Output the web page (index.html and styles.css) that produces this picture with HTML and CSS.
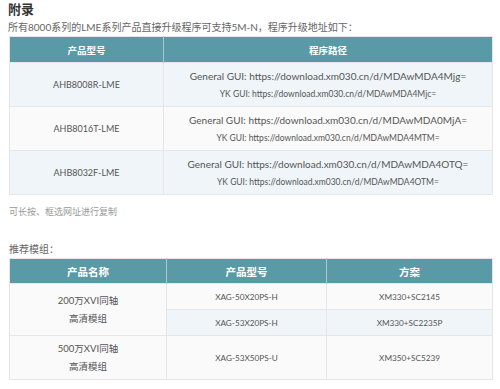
FILE: index.html
```html
<!DOCTYPE html>
<html lang="zh-CN">
<head>
  <meta charset="UTF-8" />
  <title>附录</title>
  <link rel="stylesheet" href="styles.css">
</head>
<body>
  <div class="page">
    <h2 class="title">附录</h2>
    <p class="intro">所有8000系列的LME系列产品直接升级程序可支持5M-N，程序升级地址如下：</p>

    <!-- Upgrade links -->
    <table class="grid links">
      <thead>
        <tr>
          <th class="col-model">产品型号</th>
          <th>程序路径</th>
        </tr>
      </thead>
      <tbody>
        <tr class="alt">
          <td class="model">AHB8008R-LME</td>
          <td>
            <div class="url">General GUI: https://download.xm030.cn/d/MDAwMDA4Mjg=</div>
            <div class="url small">YK GUI: https://download.xm030.cn/d/MDAwMDA4Mjc=</div>
          </td>
        </tr>
        <tr>
          <td class="model">AHB8016T-LME</td>
          <td>
            <div class="url">General GUI: https://download.xm030.cn/d/MDAwMDA0MjA=</div>
            <div class="url small">YK GUI: https://download.xm030.cn/d/MDAwMDA4MTM=</div>
          </td>
        </tr>
        <tr class="alt">
          <td class="model">AHB8032F-LME</td>
          <td>
            <div class="url">General GUI: https://download.xm030.cn/d/MDAwMDA4OTQ=</div>
            <div class="url small">YK GUI: https://download.xm030.cn/d/MDAwMDA4OTM=</div>
          </td>
        </tr>
      </tbody>
    </table>

    <p class="hint">可长按、框选网址进行复制</p>

    <p class="sub">推荐模组：</p>

    <!-- Recommended modules -->
    <table class="grid modules">
      <thead>
        <tr>
          <th class="col-name">产品名称</th>
          <th class="col-part">产品型号</th>
          <th>方案</th>
        </tr>
      </thead>
      <tbody>
        <tr class="short">
          <td rowspan="2" class="name">200万XVI同轴<br>高清模组</td>
          <td>XAG-50X20PS-H</td>
          <td>XM330+SC2145</td>
        </tr>
        <tr class="short alt">
          <td>XAG-53X20PS-H</td>
          <td>XM330+SC2235P</td>
        </tr>
        <tr>
          <td class="name">500万XVI同轴<br>高清模组</td>
          <td>XAG-53X50PS-U</td>
          <td>XM350+SC5239</td>
        </tr>
      </tbody>
    </table>
  </div>
</body>
</html>
```

FILE: styles.css
```css
* {
  margin: 0;
  padding: 0;
  box-sizing: border-box;
}
body {
  background: #ffffff;
  font-family: Lato, "Noto Sans CJK SC", sans-serif;
  color: #555;
}
.page {
  padding: 1px 7px 0 9px;
}
.title {
  font-size: 13px;
  font-weight: 700;
  color: #333;
  line-height: 16px;
  margin-left: -1px;
}
.intro {
  font-size: 10px;
  line-height: 14px;
  color: #666;
  margin: 3px 0 2px -1px;
  white-space: nowrap;
}
/* shared table look */
.grid {
  width: 100%;
  border-collapse: collapse;
  table-layout: fixed;
  border: 1px solid #e6e6e6;
}
.grid th {
  background: #5a99a6;
  color: #fff;
  font-weight: 700;
  font-size: 9.5px;
  height: 26px;
  border-right: 1px solid #a8c8d0;
}
.grid th:last-child {
  border-right: none;
}
.grid td {
  background: #fafafa;
  text-align: center;
  font-size: 9px;
  color: #555;
  border: 1px solid #e6e6e6;
  white-space: nowrap;
  padding: 0;
}
.grid tr.alt td {
  background: #eff5f8;
}
/* links table */
.links .col-model {
  width: 154px;
}
.links td {
  height: 44px;
}
.url {
  font-size: 10px;
  line-height: 18px;
}
.url.small {
  font-size: 8.5px;
}
.hint {
  font-size: 9px;
  color: #999;
  margin-top: 10px;
  line-height: 14px;
}
.sub {
  font-size: 10px;
  color: #666;
  margin-top: 23px;
  line-height: 14px;
  margin-bottom: 2px;
}
/* modules table */
.modules th {
  font-size: 10.5px;
  height: 25px;
}
.modules .col-name {
  width: 157px;
}
.modules .col-part {
  width: 160px;
}
.modules td {
  height: 44px;
  font-size: 8.2px;
}
.modules tr.short td {
  height: 26px;
}
.modules td.name {
  font-size: 9.5px;
  line-height: 18px;
}
.modules tr.alt td.name {
  background: #fafafa;
}
```
